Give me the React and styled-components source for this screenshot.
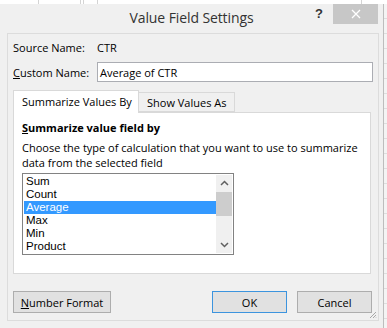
import React from "react";
import styled, { createGlobalStyle } from "styled-components";

const GlobalStyle = createGlobalStyle`
  html, body { margin: 0; padding: 0; background: #ffffff; }
  body { font-family: "Open Sans", "Noto Sans", sans-serif; font-size: 11px; color: #000; }
  * { box-sizing: border-box; }
`;

const Screen = styled.div`
  width: 387px;
  height: 328px;
  display: flex;
  flex-direction: column;
  overflow: hidden;
  background: #ffffff;
`;

const SheetTop = styled.div`
  height: 4px;
  flex: none;
  background:
    linear-gradient(to right,
      transparent 38px, #d4d4d4 38px, #d4d4d4 39px, transparent 39px,
      transparent 80px, #d4d4d4 80px, #d4d4d4 81px, transparent 81px,
      transparent 83px, #d4d4d4 83px, #d4d4d4 84px, transparent 84px,
      transparent 97px, #d4d4d4 97px, #d4d4d4 98px, transparent 98px,
      transparent 361px, #d4d4d4 361px, #d4d4d4 362px, transparent 362px),
    #ffffff;
`;

const Row = styled.div`
  display: flex;
  flex: 1;
  min-height: 0;
`;

const SheetRight = styled.div`
  flex: 1;
  background: repeating-linear-gradient(to bottom, #f4f4f4 0, #f4f4f4 14px, #dedede 14px, #dedede 15px);
`;

const Dialog = styled.div`
  width: 384px;
  display: flex;
  flex-direction: column;
  background: #f0f0f0;
  border-right: 1px solid #bdbdbd;
`;

const TitleBar = styled.div`
  height: 29px;
  display: grid;
  grid-template-columns: 1fr auto 1fr;
  align-items: start;
`;

const Title = styled.div`
  grid-column: 2;
  margin-top: 4px;
  font-size: 14px;
  color: #333;
  line-height: 20px;
  letter-spacing: -0.1px;
`;

const TitleControls = styled.div`
  grid-column: 3;
  justify-self: end;
  display: flex;
  align-items: flex-start;
  margin-right: 5px;
`;

const Help = styled.div`
  width: 20px;
  margin-right: 4px;
  margin-top: 2px;
  font-family: "Liberation Sans", sans-serif;
  font-weight: bold;
  font-size: 13px;
  line-height: 16px;
  color: #333;
  text-align: center;
`;

const CloseButton = styled.div`
  width: 45px;
  height: 20px;
  background: #c7c7c7;
  display: flex;
  align-items: center;
  justify-content: center;
`;

const Frame = styled.div`
  flex: 1;
  padding: 0 4px 7px 7px;
  display: flex;
`;

const Inner = styled.div`
  position: relative;
  flex: 1;
  border: 1px solid #dcdcdc;
  padding: 6px 5px 7px 5px;
  display: flex;
  flex-direction: column;
`;

const FieldRow = styled.div`
  display: flex;
  align-items: center;
  height: ${(p) => p.$h}px;
  margin-top: ${(p) => p.$mt || 0}px;
`;

const Label = styled.div`
  width: 84px;
  line-height: 15px;
  white-space: nowrap;
`;

const Value = styled.div`
  line-height: 15px;
`;

const TextInput = styled.div`
  flex: 1;
  height: 20px;
  background: #fff;
  border: 1px solid #abadb3;
  padding-left: 2px;
  display: flex;
  align-items: center;
`;

const Tabs = styled.div`
  margin-top: 8px;
  margin-right: 2px;
  display: flex;
  flex-direction: column;
`;

const TabStrip = styled.div`
  display: flex;
  align-items: flex-end;
  height: 22px;
`;

const Tab = styled.div`
  position: relative;
  z-index: ${(p) => (p.$active ? 1 : 0)};
  width: ${(p) => p.$w}px;
  height: ${(p) => (p.$active ? 23 : 20)}px;
  margin-bottom: ${(p) => (p.$active ? -1 : 0)}px;
  margin-left: ${(p) => (p.$active ? 0 : -1)}px;
  background: ${(p) => (p.$active ? "#fff" : "#f0f0f0")};
  border: 1px solid #d9d9d9;
  border-bottom: ${(p) => (p.$active ? "none" : "1px solid #d9d9d9")};
  padding: ${(p) => (p.$active ? "3px 0 0 8px" : "2px 0 0 8px")};
  line-height: 15px;
  white-space: nowrap;
`;

const TabPanel = styled.div`
  height: 162px;
  background: #fff;
  border: 1px solid #d9d9d9;
  padding: 7px 8px 0 8px;
  display: flex;
  flex-direction: column;
`;

const Heading = styled.div`
  font-weight: bold;
  line-height: 15px;
`;

const Description = styled.div`
  margin-top: 5px;
  line-height: 15px;
  white-space: nowrap;
`;

const ListBox = styled.div`
  margin-top: 3px;
  width: 212px;
  height: 82px;
  border: 1px solid #828282;
  padding: 1px;
  display: flex;
`;

const Items = styled.div`
  flex: 1;
  display: flex;
  flex-direction: column;
`;

const Item = styled.div`
  height: 13px;
  line-height: 13px;
  padding-left: 2px;
  font-family: "Liberation Sans", "Open Sans", sans-serif;
  font-size: 11.5px;
  background: ${(p) => (p.$selected ? "#3399ff" : "transparent")};
  color: ${(p) => (p.$selected ? "#fff" : "#000")};
`;

const Scrollbar = styled.div`
  width: 16px;
  background: #f0f0f0;
  display: flex;
  flex-direction: column;
`;

const Arrow = styled.div`
  height: 16px;
  display: flex;
  align-items: center;
  justify-content: center;
`;

const Thumb = styled.div`
  height: 24px;
  margin-top: 1px;
  background: #cdcdcd;
`;

const Track = styled.div`
  flex: 1;
`;

const ButtonRow = styled.div`
  margin-top: 17px;
  margin-right: 1px;
  display: flex;
  justify-content: space-between;
`;

const ButtonGroup = styled.div`
  display: flex;
  gap: 10px;
`;

const Button = styled.div`
  width: ${(p) => p.$w}px;
  height: 22px;
  background: #e1e1e1;
  border: 1px solid ${(p) => (p.$default ? "#3c94de" : "#adadad")};
  display: flex;
  align-items: center;
  justify-content: center;
  line-height: 15px;
`;

const Grip = styled.svg`
  position: absolute;
  right: 1px;
  bottom: 1px;
`;

const Chevron = ({ up }) => (
  <svg width="9" height="6" viewBox="0 0 9 6">
    <path
      d={up ? "M1 5 L4.5 1.5 L8 5" : "M1 1 L4.5 4.5 L8 1"}
      fill="none"
      stroke="#606060"
      strokeWidth="1.5"
    />
  </svg>
);

const items = ["Sum", "Count", "Average", "Max", "Min", "Product"];

export default function App() {
  return (
    <>
      <GlobalStyle />
      <Screen>
        <SheetTop />
        <Row>
          <Dialog>
            <TitleBar>
              <Title>Value Field Settings</Title>
              <TitleControls>
                <Help>?</Help>
                <CloseButton>
                  <svg width="10" height="10" viewBox="0 0 10 10">
                    <path d="M1 1 L9 9 M9 1 L1 9" stroke="#fff" strokeWidth="1.3" />
                  </svg>
                </CloseButton>
              </TitleControls>
            </TitleBar>
            <Frame>
              <Inner>
                <FieldRow $h={15}>
                  <Label>Source Name:</Label>
                  <Value>CTR</Value>
                </FieldRow>
                <FieldRow $h={20} $mt={7}>
                  <Label>
                    <u>C</u>ustom Name:
                  </Label>
                  <TextInput>Average of CTR</TextInput>
                </FieldRow>
                <Tabs>
                  <TabStrip>
                    <Tab $active $w={126}>Summarize Values By</Tab>
                    <Tab $w={97}>Show Values As</Tab>
                  </TabStrip>
                  <TabPanel>
                    <Heading>
                      <u>S</u>ummarize value field by
                    </Heading>
                    <Description>
                      Choose the type of calculation that you want to use to summarize
                      <br />
                      data from the selected field
                    </Description>
                    <ListBox>
                      <Items>
                        {items.map((it) => (
                          <Item key={it} $selected={it === "Average"}>
                            {it}
                          </Item>
                        ))}
                      </Items>
                      <Scrollbar>
                        <Arrow>
                          <Chevron up />
                        </Arrow>
                        <Thumb />
                        <Track />
                        <Arrow>
                          <Chevron />
                        </Arrow>
                      </Scrollbar>
                    </ListBox>
                  </TabPanel>
                </Tabs>
                <ButtonRow>
                  <Button $w={98}>
                    <span>
                      <u>N</u>umber Format
                    </span>
                  </Button>
                  <ButtonGroup>
                    <Button $w={75} $default>OK</Button>
                    <Button $w={75}>Cancel</Button>
                  </ButtonGroup>
                </ButtonRow>
                <Grip width="8" height="8" viewBox="0 0 8 8">
                  <path d="M7 1 L1 7 M7 4 L4 7 M7 6.5 L6.5 7" stroke="#a8a8a8" strokeWidth="1" />
                </Grip>
              </Inner>
            </Frame>
          </Dialog>
          <SheetRight />
        </Row>
      </Screen>
    </>
  );
}
